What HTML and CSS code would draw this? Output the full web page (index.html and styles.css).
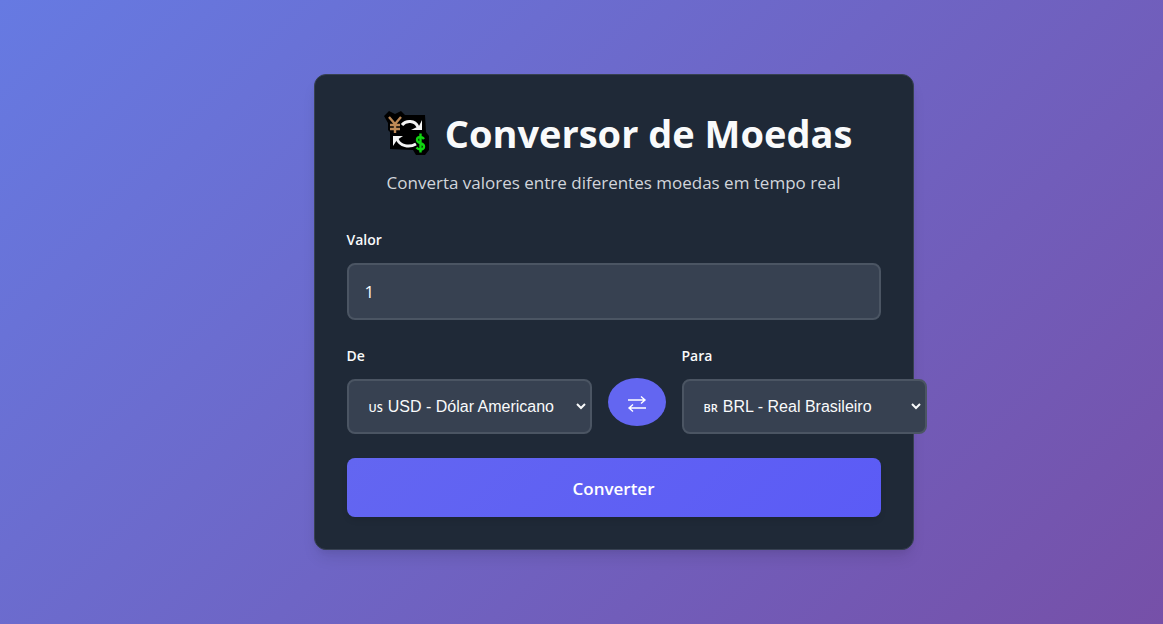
FILE: index.html
```html
<!DOCTYPE html>
<html lang="pt-BR">
<head>
<meta charset="utf-8">
<meta name="viewport" content="width=device-width, initial-scale=1">
<title>Conversor de Moedas</title>
<link rel="stylesheet" href="styles.css">
</head>
<body>
<main class="card">
  <header class="header">
    <h1 class="title">
      <svg class="logo" viewBox="0 0 64 60" aria-hidden="true">
        <path class="logo-back" d="M9 13 L14 8 L20 11 L26 8 L30 12 L50 12 L51 29 L54 33 L54 47 L50 52 L41 52 L38 47 L15 46 L15 29 L13 27 L13 20 Z"/>
        <path class="logo-ring" d="M27 22 C31 17 40 17 43 24 M41 41 C34 45 25 43 22 36"/>
        <path class="logo-head" d="M36 27 L44 23 L47 17 V27 Z M18 33 H28 L22 37 L18 43 Z"/>
        <path class="logo-yen" d="M14 14 L20 21 L26 14 M20 20 V30 M15 22 H25 M15 26 H25"/>
        <path class="logo-dollar" d="M49 36 C47 33 42 33.500 42 37 C42 41 49 39.500 49 43.500 C49 47 44 47.500 41.500 44.500 M45.500 30.500 V49.500"/>
      </svg>
      <span>Conversor de Moedas</span>
    </h1>
    <p class="subtitle">Converta valores entre diferentes moedas em tempo real</p>
  </header>
  <form class="form">
    <div class="field">
      <label class="label" for="amount">Valor</label>
      <input class="control amount" id="amount" type="text" inputmode="decimal" value="1">
    </div>
    <div class="pair">
      <div class="field">
        <label class="label" for="from">De</label>
        <div class="control picker">
          <span class="country">US</span>
          <select class="select" id="from"><option>USD - Dólar Americano</option></select>
        </div>
      </div>
      <button class="swap" type="button" aria-label="Inverter moedas">
        <svg class="swap-icon" viewBox="0 0 20 18" aria-hidden="true">
          <path d="M1 5 H18 M14 1.500 L18 5 L14 8.500 M19 13 H2 M6 9.500 L2 13 L6 16.500"/>
        </svg>
      </button>
      <div class="field">
        <label class="label" for="to">Para</label>
        <div class="control picker">
          <span class="country">BR</span>
          <select class="select" id="to"><option>BRL - Real Brasileiro</option></select>
        </div>
      </div>
    </div>
    <button class="submit" type="submit">Converter</button>
  </form>
</main>
</body>
</html>
```
FILE: styles.css
```css
* { box-sizing: border-box; }

body {
  margin: 0;
  min-height: 100vh;
  padding: 32px 0 32px 64px;
  display: flex;
  align-items: center;
  justify-content: center;
  background: linear-gradient(135deg, #667ae2 0%, #7650a8 100%);
  font-family: "Segoe UI", "Open Sans", "Noto Sans", sans-serif;
  color: #f9fafb;
}

.card {
  width: 100%;
  max-width: 600px;
  padding: 32px;
  background: #1f2937;
  border: 1px solid #374151;
  border-radius: 12px;
  box-shadow: 0 10px 15px -3px rgba(0, 0, 0, 0.1), 0 4px 6px -2px rgba(0, 0, 0, 0.05);
}

.header { margin-bottom: 33px; text-align: center; }

.title {
  display: flex;
  align-items: center;
  justify-content: center;
  gap: 8px;
  margin: 0 0 12px;
  font-size: 38px;
  font-weight: 700;
  line-height: 52px;
}

.logo { width: 64px; height: 60px; margin: -4px -2px -4px 0; fill: none; flex: none; }
.logo-back { fill: #000; }
.logo-ring { stroke: #f4f4f4; stroke-width: 3; }
.logo-head { fill: #f4f4f4; }
.logo-yen { stroke: #bd8956; stroke-width: 2.4; }
.logo-dollar { stroke: #11d611; stroke-width: 2.4; }

.subtitle { margin: 0; font-size: 17px; line-height: 24px; color: #d1d5db; }

.form { display: flex; flex-direction: column; gap: 24px; }
.field { display: flex; flex-direction: column; gap: 12px; }
.label { font-size: 14px; font-weight: 600; line-height: 23px; }

.control {
  background: #374151;
  border: 2px solid #4b5563;
  border-radius: 8px;
  color: #f9fafb;
}

.amount {
  width: 100%;
  height: 57px;
  padding: 0 16px;
  font-family: inherit;
  font-size: 17px;
}

.pair { display: flex; gap: 16px; }
.pair .field { flex: 1 0 245px; }
.picker {
  display: flex;
  align-items: center;
  gap: 1px;
  height: 55px;
  padding: 0 1px 0 20px;
}
.country { font-size: 11px; font-weight: 600; line-height: 20px; padding-top: 2px; }

.select {
  flex: 1;
  min-width: 0;
  height: 51px;
  padding: 0;
  border: 0;
  background: transparent;
  color: inherit;
  font-family: "Liberation Sans", Arial, sans-serif;
  font-size: 16px;
}

.swap {
  flex: none;
  align-self: flex-end;
  display: grid;
  place-items: center;
  width: 58px;
  height: 48px;
  margin-bottom: 8px;
  padding: 4px 0 0;
  border: 0;
  border-radius: 50%;
  background: #6366f1;
}
.swap-icon { width: 20px; height: 18px; fill: none; stroke: #fff; stroke-width: 1.4; }

.submit {
  height: 59px;
  padding: 2px 24px 0;
  border: 0;
  border-radius: 8px;
  background: linear-gradient(135deg, #6366f1, #5b5bf6);
  box-shadow: 0 4px 6px -1px rgba(0, 0, 0, 0.1);
  color: #fff;
  font-family: inherit;
  font-size: 17px;
  font-weight: 600;
}
```
